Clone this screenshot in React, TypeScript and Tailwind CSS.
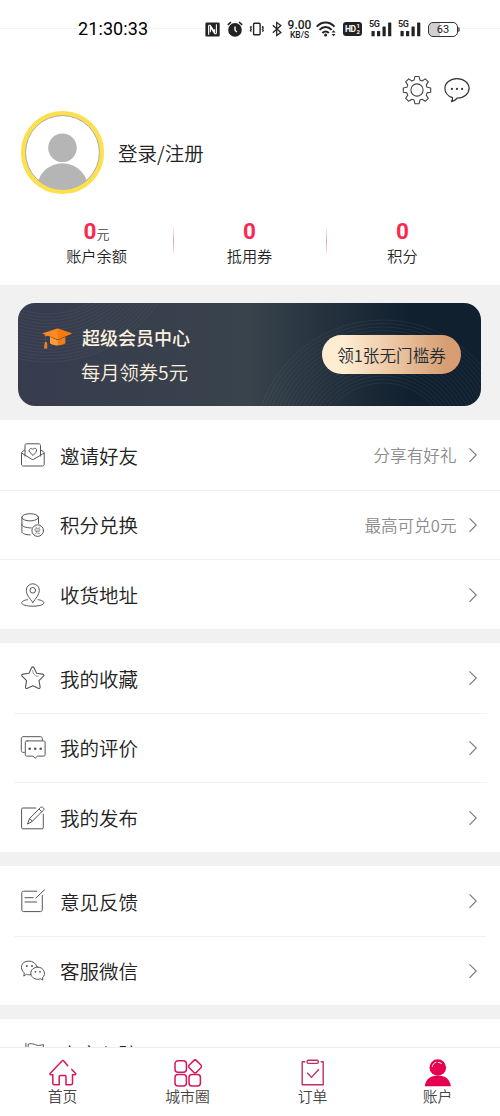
import React from "react";

type IconProps = { className?: string };

const Line = ({ children, className = "h-6 w-6" }: { children: React.ReactNode; className?: string }) => (
  <svg
    viewBox="0 0 24 24"
    className={className}
    fill="none"
    stroke="currentColor"
    strokeWidth="1"
    strokeLinecap="round"
    strokeLinejoin="round"
  >
    {children}
  </svg>
);

const InviteIcon = () => (
  <Line>
    <path d="M4 13V2.6C4 1.4 4.6.8 5.8.8h11.9c1.2 0 1.8.6 1.8 1.8V13" />
    <path d="M3.6 7.1 1.3 8.7C.7 9.1.5 9.5.5 10.2v10.9c0 1.2.7 1.9 1.9 1.9h18.9c1.2 0 1.9-.7 1.9-1.9V10.2c0-.7-.2-1.1-.8-1.5L19.8 7" />
    <path d="m.8 10.2 10.1 6.1c.6.4 1.2.4 1.8 0L23 10.2" />
    <path d="M11.8 12.2 8.6 9.1c-1.8-1.9 1.1-5.1 3.2-2.7 2.1-2.4 5-.8 3.2 2.7z" />
  </Line>
);

const ExchangeIcon = () => (
  <Line>
    <ellipse cx="9.2" cy="4.3" rx="8.3" ry="3.6" />
    <path d="M.9 4.3v14.5c0 1.6 3.6 3.1 8.2 3.1M17.5 4.3v6.2M.9 11.5c0 1.8 3.2 3.3 9.3 3.4" />
    <circle cx="16.7" cy="17.6" r="5.8" />
    <path d="m14.7 13.8 1 1.3m3-1.3-1 1.3m-3.3.7h4.4v2.3h-4.4zm1.3 2.3c0 1.5-.5 2.4-1.7 3m3-3v2.2c0 .8 1.8.6 2 0" strokeWidth=".6" />
  </Line>
);

const AddressIcon = () => (
  <Line>
    <path d="M11.8 19.4C8.8 15.5 5.3 11.6 5.3 7.3a6.5 6.5 0 0 1 13 0c0 4.3-3.5 8.2-6.5 12.1Z" />
    <circle cx="11.8" cy="7.3" r="2.8" />
    <path d="M6.4 16.7C2.9 17.2.7 18.4.7 19.8c0 2 4.8 3.4 11.1 3.4s11-1.4 11-3.4c0-1.4-2.2-2.6-5.7-3.1" />
  </Line>
);

const StarIcon = () => (
  <Line>
    <path d="M10.6 1.8c.6-1.3 1.8-1.3 2.4 0l2.6 5.4 5.9.9c1.5.2 1.9 1.3.8 2.3L18 14.7l1.1 6.2c.2 1.4-.7 2-1.9 1.4l-5.4-2.6-5.4 2.6c-1.2.6-2.1 0-1.9-1.4l1.1-6.2-4.3-4.3c-1.1-1-.7-2.1.8-2.3L8 7.2z" strokeWidth="1.1" />
    <path d="M11.6 4.8c.5 3.6 2.6 5.4 5.8 5.4" strokeWidth=".6" />
  </Line>
);

const ReviewIcon = () => (
  <Line className="h-6 w-6 overflow-visible">
    <path d="M3.4 16.4H2.1C.9 16.4.3 15.6.3 14.5V2.5C.3 1.4.9.7 2.1.7h17.3c1.3 0 1.9.8 1.9 1.9v1.7" />
    <path d="M6.2 4.9h16.2c1.2 0 1.7.5 1.7 1.4v12.4c0 .9-.5 1.4-1.4 1.4h-6.2L14.2 22.2l-2.3-2.1H5.8c-1 0-1.5-.5-1.5-1.4V6.3c0-.9.7-1.4 1.9-1.4Z" />
    <g fill="currentColor" stroke="none">
      <circle cx="8.7" cy="12.8" r="1.3" />
      <circle cx="14.2" cy="12.8" r="1.3" />
      <circle cx="19.7" cy="12.8" r="1.3" />
    </g>
  </Line>
);

const PublishIcon = () => (
  <Line>
    <path d="M14.8 2H1.8C1 2 .6 2.3.6 3.1v18.5c0 .8.4 1.2 1.2 1.2h19.2c.9 0 1.3-.4 1.3-1.3V8.2" />
    <path d="m6.6 17.7 2-5.2L18 3l2.8 2.7-9.4 9.5zM8.6 12.5l2.8 2.7M18 3l1.3-1.4c1.7-1.7 5 1 3.1 2.8L21 5.7" />
  </Line>
);

const FeedbackIcon = () => (
  <Line>
    <path d="M15.8 2.2H2.5C1.4 2.2.8 2.8.8 3.9v16.9c0 1.2.6 1.8 1.8 1.8h16.9c1.2 0 1.8-.6 1.8-1.8V6.4M14.9 8.9l8.6-8M4 8.7h8.3M4 13h11.6" />
  </Line>
);

const WechatIcon = () => (
  <Line>
    <path d="M9.9 15.6c-1.6.4-3 .3-4.5-.3l-2.6 1.8.5-3.1C-1.7 9.7-.2 2.1 7.8 2.1c4 0 7.2 2.1 8 5.6" />
    <path d="M16.8 8.1c-4 0-7 2.8-7 6.1s3 6.1 7 6.1c1.2 0 2.2-.2 3-.5l2 1.3-.3-2.3c4-3.6 1.7-10.7-4.7-10.7Z" />
    <g fill="currentColor" stroke="none">
      <circle cx="5.8" cy="7" r="1" />
      <circle cx="11" cy="7" r="1" />
      <circle cx="14.5" cy="12.8" r=".9" />
      <circle cx="19" cy="12.8" r=".9" />
    </g>
  </Line>
);

const FlagIcon = () => (
  <Line>
    <path d="M4.9 1.4V24M7.5 2.2c4-2.2 7.5 2.1 11.5 1.1 1-.2 2-.6 3.5-.6l-.6 6.1.6 5.9c-6 2.2-9-2-15-.2z" />
  </Line>
);

const Chevron = () => (
  <svg viewBox="0 0 8 16" className="h-4 w-2" fill="none" stroke="#777" strokeWidth="1.15">
    <path d="M.5 1.3 7.3 8 .5 14.8" />
  </svg>
);

const GearIcon = ({ className }: IconProps) => {
  return (
    <svg viewBox="-15 -15 30 30" className={className} fill="none" stroke="#444" strokeWidth="1.1" strokeLinejoin="round">
      <circle r="6.1" />
      <path d="M-2.1-13.5h4.2l.8 3.6 2.1.9 3.3-2.1 3 3-2.1 3.2.9 2.2 3.6.7v4.2l-3.6.7-.9 2.2 2.1 3.2-3 3-3.3-2.1-2.1.9-.8 3.6h-4.2l-.8-3.6-2.1-.9-3.3 2.1-3-3 2.1-3.2-.9-2.2-3.6-.7v-4.2l3.6-.7.9-2.2-2.1-3.2 3-3 3.3 2.1 2.1-.9z" />
    </svg>
  );
};

const Signal = () => (
  <div className="relative h-[15px] w-[22px]">
    <span className="absolute -top-[3px] -left-px text-[9px] leading-[11px] font-semibold tracking-[-0.4px]">5G</span>
    <svg viewBox="0 0 22 15" className="h-[15px] w-[22px]" fill="currentColor">
      <rect x="1.5" y="9" width="3.2" height="5.2" rx=".5" />
      <rect x="7" y="9" width="3.2" height="5.2" rx=".5" />
      <rect x="12.5" y="4.4" width="3.2" height="9.8" rx=".5" />
      <rect x="18.1" y=".6" width="3.2" height="13.6" rx=".5" />
    </svg>
  </div>
);

function StatusBar() {
  return (
    <div className="relative h-[58px]">
      <div className="absolute inset-x-0 top-7 h-px bg-[#f4f4f4]" />
      <div className="relative flex h-[58px] items-center font-[Roboto] text-[#222]">
        <div className="ml-[77px] bg-white px-px text-[18px] leading-5 tracking-[0.1px] text-black">
          21:30:33
        </div>
        <div className="ml-auto flex h-5 w-[256px] items-center bg-white">
          <svg viewBox="0 0 15 15" className="h-[15px] w-[15px]">
            <rect x=".4" y=".4" width="14.3" height="14.2" rx="1.4" fill="currentColor" />
            <path d="M3.6 12.8V3.4M3.6 3.2h1.6l4.4 6.6V7.2M11.4 2.2v9.4M11.4 11.8H9.8L5.4 5.2v5" fill="none" stroke="#fff" strokeWidth="1.1" />
          </svg>
          <svg viewBox="0 0 16 16" className="ml-[7px] h-4 w-4">
            <circle cx="8" cy="8.9" r="6.8" fill="currentColor" />
            <path d="M.8 3.9 4 1M15.2 3.9 12 1" stroke="currentColor" strokeWidth="1.6" />
            <path d="M8 5.5v3.6l1.8 2" fill="none" stroke="#fff" strokeWidth="1.4" />
          </svg>
          <svg viewBox="0 0 16 16" className="ml-1.5 h-4 w-4" fill="none" stroke="currentColor" strokeWidth="1.4">
            <rect x="4.6" y="2.3" width="6.5" height="11.5" rx="1" />
            <path d="m1.5 5 .8 1-.9 1 .9 1.2-.9 1.2.9 1.2M14.2 5l-.8 1 .9 1-.9 1.2.9 1.2-.9 1.2" strokeWidth="1.2" />
          </svg>
          <svg viewBox="0 0 10 16" className="ml-[7px] h-4 w-2.5" fill="none" stroke="currentColor" strokeWidth="1.25">
            <path d="m.8 4.2 8.1 7.3-4.2 3V1.5l4.2 3L.8 11.7" />
          </svg>
          <div className="ml-[5px] flex w-[25px] flex-col items-center font-medium">
            <span className="text-[12px] leading-[11px]">9.00</span>
            <span className="text-[8.5px] leading-[8px]">KB/S</span>
          </div>
          <svg viewBox="0 0 22 16" className="ml-1 h-4 w-[22px]" fill="none" stroke="currentColor" strokeWidth="1.9">
            <path d="M.7 5.6c5.2-5.5 12.6-5.5 17.8 0M3.5 8.9c3.6-3.9 8.6-3.9 12.2 0M6.4 12c1.9-2 4.6-2 6.4 0" />
            <circle cx="9.6" cy="14" r="1.5" fill="currentColor" stroke="none" />
            <path d="m15.6 11.5 2-2.3 2 2.3zm0 1.5 2 2.3 2-2.3z" fill="currentColor" stroke="none" />
          </svg>
          <div className="ml-[5px] flex h-[14px] w-[19px] items-center rounded-[3px] bg-[#222] pl-0.5 text-white">
            <span className="text-[8.5px] leading-[14px] font-bold tracking-[-0.5px]">HD</span>
            <span className="ml-px flex flex-col text-[6px] leading-[6px] font-bold">
              <span>1</span>
              <span>2</span>
            </span>
          </div>
          <div className="ml-2">
            <Signal />
          </div>
          <div className="ml-[7px]">
            <Signal />
          </div>
          <div className="relative ml-[7px] flex h-[15px] w-[30px] items-center justify-center rounded-[5px] border border-[#333] bg-linear-to-r from-[#d0d0d0] from-40% to-white to-40% text-[11px] leading-[13px]">
            63
            <span className="absolute top-1 -right-[3px] h-[5px] w-0.5 rounded-r bg-[#777]" />
          </div>
        </div>
        <div className="w-[39px]" />
      </div>
    </div>
  );
}

const stats = [
  { value: "0", unit: "元", label: "账户余额" },
  { value: "0", label: "抵用券" },
  { value: "0", label: "积分" },
];

function Profile() {
  return (
    <section className="h-[227px]">
      <div className="flex h-[52px] items-start justify-end pt-[17px] pr-[30px]">
        <GearIcon className="h-[30px] w-[30px]" />
        <svg viewBox="0 0 26 26" className="mt-0.5 ml-3 h-[26px] w-[26px]" fill="none" stroke="#333" strokeWidth="1.2">
          <path d="M13 1.6c6.8 0 12.1 4.3 12.1 9.7S20 21 13.4 21c-1.6 1.8-3.5 3-6 3.7 1-1.4 1.3-2.7 1.1-4.1C4 19.4.9 15.7.9 11.3c0-5.4 5.3-9.7 12.1-9.7Z" strokeLinejoin="round" />
          <g fill="#333" stroke="none">
            <circle cx="7.9" cy="11.9" r="1.1" />
            <circle cx="13" cy="11.9" r="1.1" />
            <circle cx="18.1" cy="11.9" r="1.1" />
          </g>
        </svg>
      </div>
      <div className="flex h-[85px] items-center pl-5">
        <svg viewBox="0 0 85 85" className="h-[85px] w-[85px]">
          <clipPath id="face">
            <circle cx="42.5" cy="42.5" r="37" />
          </clipPath>
          <circle cx="42.5" cy="42.5" r="39.3" fill="#fff" stroke="#fde04c" strokeWidth="4.6" />
          <circle cx="42.5" cy="42.5" r="36.9" fill="none" stroke="#aaa" strokeWidth="1" />
          <g clipPath="url(#face)" fill="#b5b5b5">
            <circle cx="42.5" cy="37.8" r="14.3" />
            <circle cx="42.5" cy="79" r="25.7" />
          </g>
        </svg>
        <span className="ml-[13px] pt-px text-[19.5px] font-[350] text-[#222]">登录/注册</span>
      </div>
      <div className="mt-[22px] grid grid-cols-3 px-[20px] pr-[21px]">
        {stats.map((s, i) => (
          <div key={s.label} className="relative flex h-12 flex-col items-center">
            <div className="flex h-7 items-baseline text-[13px] font-[350] text-[#444]">
              <b className="font-[Roboto] text-[22.5px] leading-7 text-[#fa2850]">{s.value}</b>
              {s.unit}
            </div>
            <div className="text-[15.2px] leading-[21px] font-[350] text-[#222]">{s.label}</div>
            {i > 0 && (
              <span className="absolute top-2 left-0 h-8 w-px bg-linear-to-b from-transparent via-[#e3a3b5] to-transparent" />
            )}
          </div>
        ))}
      </div>
    </section>
  );
}

const leftRings = Array.from({ length: 16 }, (_, i) => 84 + i * 3.2);
const rightRings = Array.from({ length: 19 }, (_, i) => 66 + i * 3.5);

function MemberBanner() {
  return (
    <section className="h-[135px] bg-[#f1f1f1] pt-[18px] pr-[19px] pl-[18px]">
      <div className="relative flex h-[103px] items-center overflow-hidden rounded-[17px] bg-linear-to-r from-[#373c4e] via-[#38434c] via-50% to-[#11202f] to-85%">
        {/* Decorative rings */}
        <svg viewBox="0 0 463 103" className="absolute inset-0 h-full w-full" fill="none" stroke="#9aa9b8" strokeOpacity=".14" strokeWidth=".7">
          {leftRings.map((r) => (
            <circle key={r} cx="30" cy="-73" r={r} />
          ))}
          {rightRings.map((r) => (
            <circle key={r} cx="365" cy="146" r={r} />
          ))}
        </svg>
        <svg viewBox="0 0 30 21" className="relative mb-[33px] ml-6 h-[21px] w-[30px]">
          <path d="M8 9v6.3c3.6 2.7 11.8 2.7 15.4 0V9l-7.7 3.2z" fill="#f57c14" />
          <path d="M8 9v6.3c2 1.5 4.8 2.1 7.7 2.1v-5z" fill="#ff9b3c" />
          <path d="M0 5.6 15.5.4 30 5.6l-14.3 5.8z" fill="#ff8a22" />
          <path d="m15.5.4 14.5 5.2-14.3 5.8z" fill="#f67a10" />
          <path d="m13.7 5.5-9.9 2.7v5.3l1.3 1.6.2 5.4H2l.6-5.3 1-1.6V8l-1.5-.8z" fill="#f58024" />
        </svg>
        <div className="relative ml-[9px] text-[#fff1df]">
          <div className="pl-px text-[18px] leading-7 font-medium">超级会员中心</div>
          <div className="mt-[7px] text-[19.3px] leading-7 font-[350]">每月领券5元</div>
        </div>
        <button className="absolute top-8 right-5 h-[39px] w-[139px] rounded-full bg-linear-to-r from-[#ffedd2] from-15% to-[#d69e72] to-90% text-[16.6px] leading-[40px] font-[350] whitespace-nowrap text-[#222b33]">
          领1张无门槛券
        </button>
      </div>
    </section>
  );
}

type Row = { icon: React.ReactNode; label: string; hint?: string };

const groups: { height: string; divider: string; rows: Row[] }[] = [
  {
    height: "h-[209px]",
    divider: "left-0 right-0",
    rows: [
      { icon: <InviteIcon />, label: "邀请好友", hint: "分享有好礼" },
      { icon: <ExchangeIcon />, label: "积分兑换", hint: "最高可兑0元" },
      { icon: <AddressIcon />, label: "收货地址" },
    ],
  },
  {
    height: "h-[209px]",
    divider: "left-3.5 right-3.5",
    rows: [
      { icon: <StarIcon />, label: "我的收藏" },
      { icon: <ReviewIcon />, label: "我的评价" },
      { icon: <PublishIcon />, label: "我的发布" },
    ],
  },
  {
    height: "h-[139px]",
    divider: "left-3.5 right-3.5",
    rows: [
      { icon: <FeedbackIcon />, label: "意见反馈" },
      { icon: <WechatIcon />, label: "客服微信" },
    ],
  },
  {
    height: "h-[69px]",
    divider: "left-3.5 right-3.5",
    rows: [{ icon: <FlagIcon />, label: "商家入驻" }],
  },
];

function Menu() {
  return (
    <div className="flex h-[627px] flex-col gap-3.5 overflow-hidden bg-[#f1f1f1]">
      {groups.map((g, n) => (
        <div key={n} className={`flex shrink-0 flex-col bg-white ${g.height}`}>
          {g.rows.map((row, i) => (
            <div key={row.label} className="relative flex flex-1 items-center pt-px pr-[23.5px] pl-[21px] text-[#555]">
              {i > 0 && <span className={`absolute top-0 h-px bg-[#f2f2f2] ${g.divider}`} />}
              {row.icon}
              <span className="ml-[15px] text-[19.5px] font-[350] text-[#222]">{row.label}</span>
              <span className="mr-[12px] ml-auto pt-px text-[16.6px] font-[350] text-[#8c8c8c]">{row.hint}</span>
              <Chevron />
            </div>
          ))}
        </div>
      ))}
    </div>
  );
}

const tabs = [
  {
    label: "首页",
    icon: (
      <svg viewBox="0 0 28 28" className="h-7 w-7" fill="none" stroke="#d6175c" strokeWidth="1.5" strokeLinejoin="round" strokeLinecap="round">
        <path d="M18.7 6.8 14.8 2c-.6-.7-1.2-.7-1.8 0L1.3 14.2c-.6.8-.4 1.5.5 1.5h2v8.6c0 1 .5 1.5 1.5 1.5h4.9v-8c0-.8.4-1.2 1.2-1.2h4.4c.8 0 1.2.4 1.2 1.2v8h5c1 0 1.5-.5 1.5-1.5v-8.6h2.3c1 0 1.2-.7.6-1.4l-3.6-3.9" />
      </svg>
    ),
  },
  {
    label: "城市圈",
    icon: (
      <svg viewBox="0 0 28 28" className="h-7 w-7" fill="none" stroke="#d6175c" strokeWidth="1.5">
        <rect x="1" y="1.8" width="11.4" height="11.4" rx="3" />
        <rect x="1" y="15.6" width="11.4" height="11.4" rx="3" />
        <rect x="15" y="15.6" width="11.4" height="11.4" rx="3" />
        <rect x="16" y="2.3" width="10.2" height="10.2" rx="2" transform="rotate(45 21.1 7.4)" />
      </svg>
    ),
  },
  {
    label: "订单",
    icon: (
      <svg viewBox="0 0 28 28" className="h-7 w-7" fill="none" stroke="#c52b65" strokeWidth="1.4" strokeLinejoin="round">
        <path d="M6.2 2.8H3.2v23h21V2.8h-2.6" />
        <rect x="8.1" y="1.3" width="11.2" height="3.1" rx="1.3" />
        <path d="m8.2 13.7 4.3 4.7 7.4-8.1" />
      </svg>
    ),
  },
  {
    label: "账户",
    icon: (
      <svg viewBox="0 0 28 28" className="h-7 w-7" fill="#e60050">
        <circle cx="13.8" cy="8.5" r="8.3" />
        <path d="M.8 27.2c.8-6.6 5.7-10.6 13-10.6s12.3 4 13.1 10.6z" />
        <path d="M8.3 7.6c.3-2.2 1.5-3.7 3.8-4.3M14.3 3.4c1.3.1 2.3.4 3.2 1.1" fill="none" stroke="#fff" strokeWidth=".9" strokeLinecap="round" />
      </svg>
    ),
  },
];

export default function App() {
  return (
    <main className="h-[1116px] w-[500px] overflow-hidden bg-white font-['Noto_Sans_CJK_SC',sans-serif]">
      <StatusBar />
      <Profile />
      <MemberBanner />
      <Menu />
      <nav className="grid h-[69px] grid-cols-4 border-t border-[#ededed] bg-white">
        {tabs.map((tab) => (
          <div key={tab.label} className="flex flex-col items-center pt-[11px]">
            {tab.icon}
            <span className="-mt-px text-[14.8px] leading-5 font-[350] text-[#444]">{tab.label}</span>
          </div>
        ))}
      </nav>
    </main>
  );
}
